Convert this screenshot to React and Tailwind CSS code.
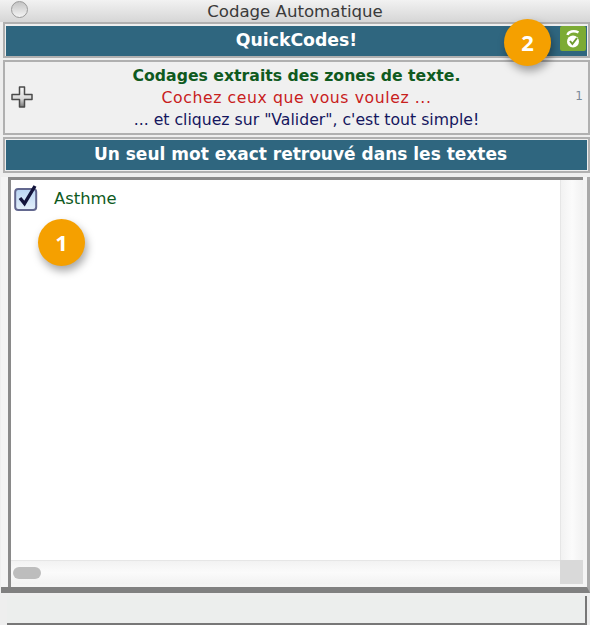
function Badge({ n, className }) {
  return (
    <div className={`absolute flex h-[47px] w-[47px] items-center justify-center rounded-full bg-[#f5a000] text-[22px] font-bold text-white shadow-[2px_5px_8px_rgba(0,0,0,0.35)] font-['Open_Sans',sans-serif] ${className}`}>
      {n}
    </div>
  )
}

function BlueBar({ children, className = '', innerClassName = '' }) {
  return (
    <div className={`border-2 border-[#b0b0b0] p-px ${className}`}>
      <div className={`flex h-[30px] items-center justify-center bg-[#2f667f] font-bold text-white ${innerClassName}`}>
        {children}
      </div>
    </div>
  )
}

function PlusIcon() {
  return (
    <svg width="24" height="24" viewBox="0 0 24 24">
      <defs>
        <linearGradient id="plus" x1="0" y1="0" x2="0" y2="1">
          <stop offset="0" stopColor="#fafafa" />
          <stop offset="0.6" stopColor="#d8d8d8" />
          <stop offset="1" stopColor="#777777" />
        </linearGradient>
      </defs>
      <path d="M9.5 2h5v7.5H22v5h-7.5V22h-5v-7.5H2v-5h7.5z" fill="url(#plus)" stroke="#4a4a4a" strokeWidth="1.5" strokeLinejoin="round" />
    </svg>
  )
}

function CheckBox() {
  return (
    <svg width="24" height="26" viewBox="0 0 24 26">
      <defs>
        <linearGradient id="box" x1="0" y1="0" x2="0" y2="1">
          <stop offset="0" stopColor="#b9d5f3" />
          <stop offset="1" stopColor="#e4f0fb" />
        </linearGradient>
      </defs>
      <rect x="1.2" y="4" width="21" height="21" rx="3" fill="url(#box)" stroke="#63688f" strokeWidth="2" />
      <path d="M6 13l4.5 5.5L21 1" fill="none" stroke="#12143c" strokeWidth="3.4" />
    </svg>
  )
}

function ValidateIcon() {
  return (
    <div className="flex h-[25px] w-[26px] items-center justify-center rounded-[2px] bg-[#7cab35]">
      <svg width="18" height="21" viewBox="0 0 18 21">
        <path d="M3.5 7c1-3.5 6-5 11-2.6" fill="none" stroke="#fff" strokeWidth="2.4" />
        <circle cx="9" cy="13.5" r="6" fill="#fff" />
        <path d="M6 13l2.4 3L13 10" fill="none" stroke="#6d9a2e" strokeWidth="2" />
      </svg>
    </div>
  )
}

export default function App() {
  return (
    <div className="relative flex h-[625px] w-[590px] flex-col overflow-hidden bg-[#eeeeee] font-['DejaVu_Sans',sans-serif]">
      {/* title bar */}
      <div className="relative flex h-[22px] shrink-0 items-center justify-center bg-gradient-to-b from-[#f2f2f2] to-[#d6d6d6] pt-[2px] text-[16.6px] text-[#3a3a3a]">
        <div className="absolute left-[11px] top-[1px] h-[17px] w-[17px] rounded-full border border-[#9a9a9a] bg-gradient-to-b from-[#c4c4c4] to-[#f4f4f4]" />
        Codage Automatique
      </div>

      <div className="flex flex-1 flex-col gap-[2px] pl-[3px]">
        <BlueBar className="relative pt-[2px] pb-0 text-[17.3px]">
          QuickCodes!
          <div className="absolute right-[2px] top-[2px]">
            <ValidateIcon />
          </div>
        </BlueBar>

        <div className="relative flex h-[75px] flex-col items-center justify-center border-2 border-[#b0b0b0] bg-[#f0f0f0] text-[15.7px] leading-[22px]">
          <div className="absolute left-[5px] top-[23px]">
            <PlusIcon />
          </div>
          <span className="font-bold text-[#0f5a1e]">Codages extraits des zones de texte.</span>
          <span className="tracking-[0.58px] text-[#c8201c]">Cochez ceux que vous voulez ...</span>
          <span className="pl-[20px] text-[#15165e]">... et cliquez sur "Valider", c'est tout simple!</span>
          <span className="absolute right-[5px] top-[23px] text-[12px] text-[#7a8a99]">1</span>
        </div>

        <BlueBar className="text-[17px]" innerClassName="pl-[8px]">Un seul mot exact retrouvé dans les textes</BlueBar>

        {/* list area, its bottom edge runs the whole window width */}
        <div className="-ml-[2px] mt-[2px] h-[416px] border-b-[6px] border-r-[3px] border-b-[#808080] border-r-[#a9a9a9] bg-[#f4f4f4] pl-[7px] pr-[4px]">
          <div className="flex h-full flex-col border-l-[3px] border-t-[3px] border-[#8a8a8a]">
            <div className="flex min-h-0 flex-1">
              <div className="flex-1 bg-white pl-[3px] pt-[5px]">
                <div className="flex items-center gap-[16px] text-[#0f5a1e]">
                  <CheckBox />
                  <span className="pt-[2px] text-[16.4px]">Asthme</span>
                </div>
              </div>
              <div className="w-[23px] border-l border-[#e6e6e6] bg-gradient-to-r from-[#f2f2f2] via-[#fbfbfb] to-[#f2f2f2]" />
            </div>
            <div className="flex h-[24px] shrink-0 items-center">
              <div className="flex h-full flex-1 items-center border-t border-[#e6e6e6] bg-gradient-to-b from-[#f2f2f2] via-[#fbfbfb] to-[#f2f2f2] pl-[2px]">
                <div className="h-[12px] w-[28px] rounded-full bg-[#bdbdbd]" />
              </div>
              <div className="h-full w-[23px] bg-[#d9d9d9]" />
            </div>
            <div className="h-[3px] shrink-0 bg-[#f4f4f4]" />
          </div>
        </div>

        <div className="ml-[4px] mr-[3px] mt-[1px] h-[29px] border-b-2 border-r-2 border-[#777] bg-[#eceeed]" />
      </div>

      <Badge n="2" className="left-[504px] top-[19px]" />
      <Badge n="1" className="left-[38px] top-[219px]" />
    </div>
  )
}
